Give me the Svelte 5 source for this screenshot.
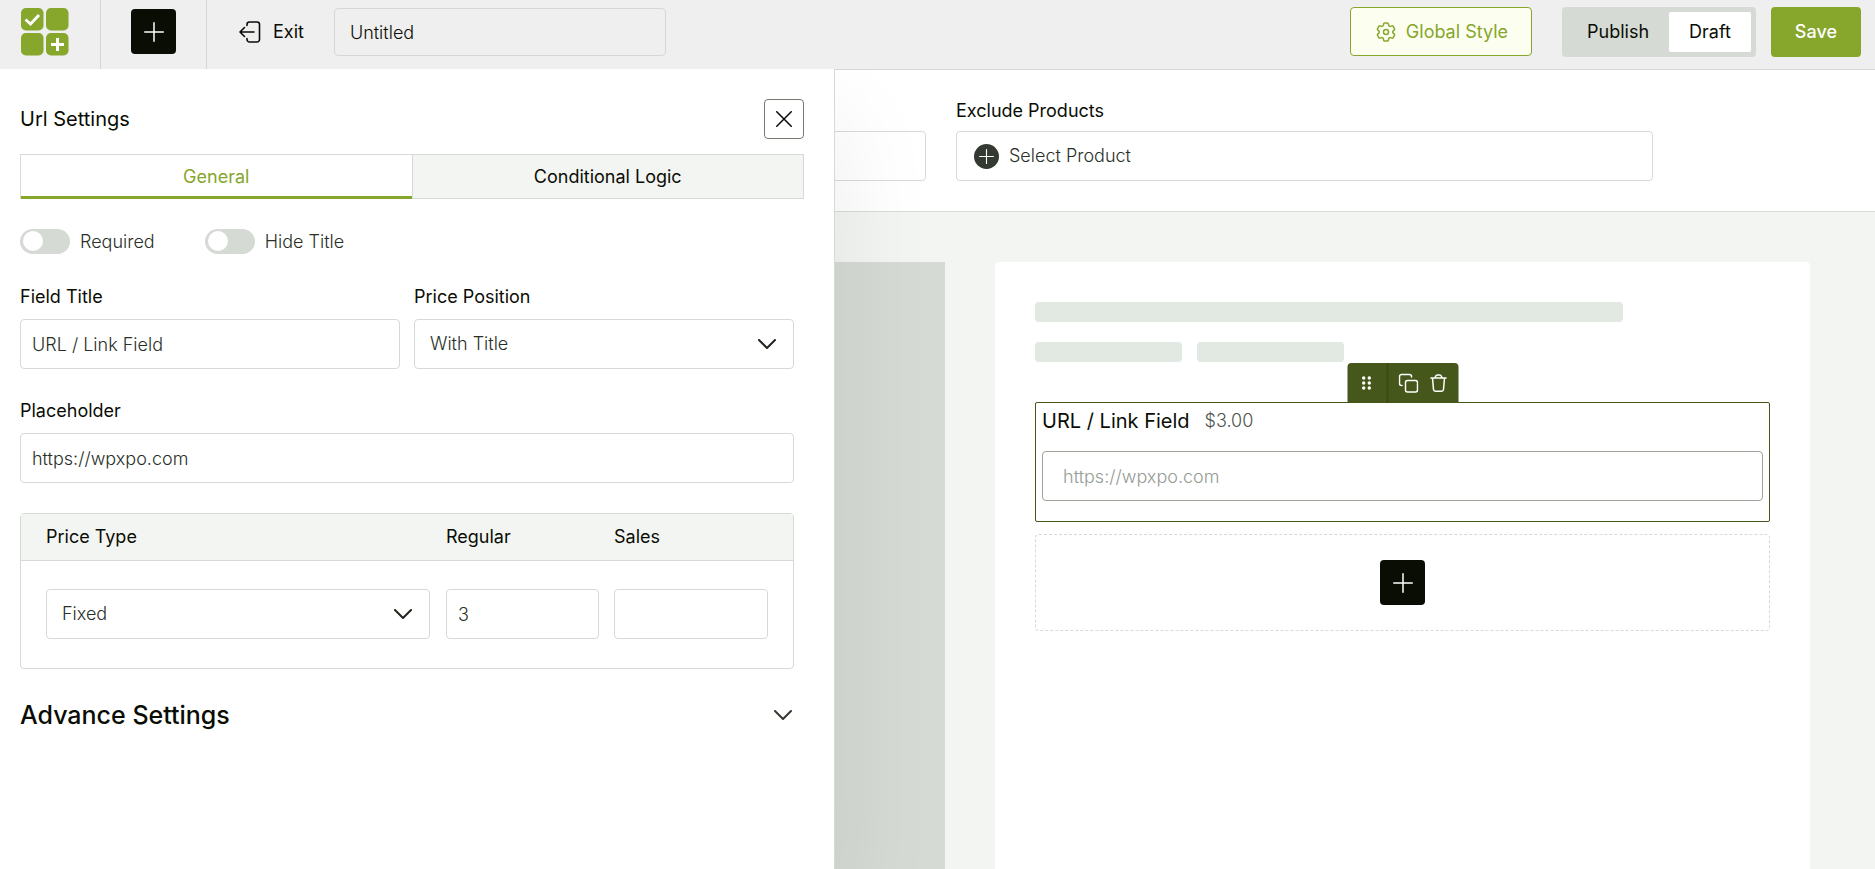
<script>
  let title = $state('Untitled');
  let status = $state('Draft');
  let tab = $state('General');
  let advanceOpen = $state(false);

  let field = $state({
    required: false,
    hideTitle: false,
    title: 'URL / Link Field',
    pricePosition: 'With Title',
    placeholder: 'https://wpxpo.com',
    priceType: 'Fixed',
    regular: '3',
    sales: '',
  });

  const tabs = ['General', 'Conditional Logic'];
  const statuses = ['Publish', 'Draft'];
  const positions = ['With Title', 'With Field'];
  const priceTypes = ['Fixed', 'Percentage', 'No Cost'];
  const dots = [3, 8, 13];

  let price = $derived('$' + Number(field.sales || field.regular || 0).toFixed(2));
</script>

{#snippet plus(size)}
  <svg viewBox="0 0 20 20" width={size} height={size} fill="none" stroke="currentColor" stroke-width="1.5" stroke-linecap="round" aria-hidden="true">
    <path d="M10 0.75v18.5M0.75 10h18.5" />
  </svg>
{/snippet}

{#snippet chevron()}
  <svg class="chevron" viewBox="0 0 18 11" width="18" height="11" fill="none" stroke="currentColor" stroke-width="2" stroke-linecap="round" stroke-linejoin="round" aria-hidden="true">
    <path d="m1 1 8 8 8-8" />
  </svg>
{/snippet}

<div class="app">
  <header class="topbar">
    <a class="logo" href="#home" aria-label="Home">
      <svg viewBox="0 0 48 48" width="48" height="48" aria-hidden="true">
        <g fill="#86a62c">
          <rect width="22.5" height="22.5" rx="5" />
          <rect x="25" width="22.5" height="22.5" rx="5" />
          <rect y="25" width="22.5" height="22.5" rx="5" />
          <rect x="25" y="25" width="22.5" height="22.5" rx="5" />
        </g>
        <path d="m4.500 11.500 5 4.500 8.500-9" fill="none" stroke="#fff" stroke-width="2.8" />
        <path d="M36.500 30v13M30 36.500h13" fill="none" stroke="#fff" stroke-width="3" />
      </svg>
    </a>
    <div class="add-wrap">
      <button type="button" class="add" aria-label="Add field">{@render plus(20)}</button>
    </div>
    <a class="exit" href="#exit">
      <svg viewBox="0 0 22 22" width="22" height="22" fill="none" stroke="currentColor" stroke-width="1.6" stroke-linecap="round" stroke-linejoin="round" aria-hidden="true">
        <path d="M8 4.500V3.500a2.500 2.500 0 0 1 2.500-2.500H18a2.500 2.500 0 0 1 2.500 2.500v15A2.500 2.500 0 0 1 18 21h-7.500A2.500 2.500 0 0 1 8 18.500v-1" />
        <path d="M15 11H1M5.500 6.500 1 11l4.500 4.500" />
      </svg>
      Exit
    </a>
    <input class="name" type="text" aria-label="Option title" bind:value={title} />
    <div class="actions">
      <button type="button" class="global">
        <svg viewBox="0 0 24 24" width="24" height="24" fill="none" stroke="currentColor" stroke-width="1.500" stroke-linejoin="round" aria-hidden="true">
          <path d="M9.594 3.940c.09-.542.56-.94 1.110-.94h2.593c.55 0 1.020.398 1.110.94l.213 1.281c.063.374.313.686.645.87.074.04.147.083.22.127.325.196.72.257 1.075.124l1.217-.456a1.125 1.125 0 0 1 1.370.49l1.296 2.247a1.125 1.125 0 0 1-.26 1.431l-1.003.827c-.293.241-.438.613-.43.992a7.723 7.723 0 0 1 0 .255c-.008.378.137.75.43.991l1.004.827c.424.35.534.955.26 1.430l-1.298 2.247a1.125 1.125 0 0 1-1.369.491l-1.217-.456c-.355-.133-.75-.072-1.076.124a6.470 6.470 0 0 1-.22.128c-.331.183-.581.495-.644.869l-.213 1.281c-.09.543-.56.94-1.110.94h-2.594c-.55 0-1.019-.398-1.110-.94l-.213-1.281c-.062-.374-.312-.686-.644-.87a6.520 6.520 0 0 1-.22-.127c-.325-.196-.72-.257-1.076-.124l-1.217.456a1.125 1.125 0 0 1-1.369-.49l-1.297-2.247a1.125 1.125 0 0 1 .26-1.431l1.004-.827c.292-.24.437-.613.43-.991a6.932 6.932 0 0 1 0-.255c.007-.38-.138-.751-.43-.992l-1.004-.827a1.125 1.125 0 0 1-.26-1.430l1.297-2.247a1.125 1.125 0 0 1 1.370-.491l1.216.456c.356.133.751.072 1.076-.124.072-.044.146-.086.22-.128.332-.183.582-.495.644-.869l.214-1.280Z" />
          <circle cx="12" cy="12" r="2.500" />
        </svg>
        Global Style
      </button>
      <div class="status" role="group" aria-label="Status">
        {#each statuses as s}
          <button type="button" class:active={status === s} aria-pressed={status === s} onclick={() => (status = s)}>{s}</button>
        {/each}
      </div>
      <button type="button" class="save">Save</button>
    </div>
  </header>

  <div class="workspace">
    <section class="products">
      <div class="product">
        <span class="label">Select Products</span>
        <button type="button" class="picker">All Products</button>
      </div>
      <div class="product">
        <span class="label">Exclude Products</span>
        <button type="button" class="picker">
          <span class="picker-icon">{@render plus(15)}</span>
          Select Product
        </button>
      </div>
    </section>

    <main class="canvas">
      <div class="gallery"></div>
      <div class="preview">
        <div class="bar long"></div>
        <div class="bars">
          <div class="bar"></div>
          <div class="bar"></div>
        </div>

        <div class="block">
          <div class="tools">
            <button type="button" class="drag" aria-label="Move">
              <svg viewBox="0 0 10 16" width="10" height="16" fill="currentColor" aria-hidden="true">
                {#each dots as y}
                  <circle cx="2.200" cy={y} r="1.700" />
                  <circle cx="7.800" cy={y} r="1.700" />
                {/each}
              </svg>
            </button>
            <button type="button" aria-label="Duplicate">
              <svg viewBox="0 0 20 20" width="20" height="20" fill="none" stroke="currentColor" stroke-width="1.500" stroke-linecap="round" stroke-linejoin="round" aria-hidden="true">
                <rect x="7" y="7.500" width="12" height="11.500" rx="2" />
                <path d="M3.500 12.500H3a2 2 0 0 1-2-2V3.500a2 2 0 0 1 2-2h8a2 2 0 0 1 2 2V4" />
              </svg>
            </button>
            <button type="button" aria-label="Delete">
              <svg viewBox="0 0 18 20" width="18" height="20" fill="none" stroke="currentColor" stroke-width="1.500" stroke-linecap="round" stroke-linejoin="round" aria-hidden="true">
                <path d="M1.500 5h15M5.500 5l.6-1.700A2 2 0 0 1 8 2h2a2 2 0 0 1 1.900 1.300L12.500 5M3 5l1 11.500A2 2 0 0 0 6 18.300h6a2 2 0 0 0 2-1.800L15 5" />
              </svg>
            </button>
          </div>
          <div class="block-head">
            <label for="preview-url">{field.title}</label>
            <span>{price}</span>
          </div>
          <input id="preview-url" type="url" placeholder={field.placeholder} />
        </div>

        <div class="dropzone">
          <button type="button" class="add" aria-label="Add field">{@render plus(20)}</button>
        </div>
      </div>
    </main>

    <aside class="panel">
      <div class="panel-head">
        <h2>Url Settings</h2>
        <button type="button" class="close" aria-label="Close">
          <svg viewBox="0 0 16 16" width="16" height="16" fill="none" stroke="currentColor" stroke-width="1.5" stroke-linecap="round" aria-hidden="true">
            <path d="m0.750 0.750 14.500 14.500M15.250 0.750 0.750 15.250" />
          </svg>
        </button>
      </div>

      <div class="tabs" role="tablist">
        {#each tabs as t}
          <button type="button" role="tab" class:active={tab === t} aria-selected={tab === t} onclick={() => (tab = t)}>{t}</button>
        {/each}
      </div>

      <div class="fields">
        <div class="toggles">
          <label><input type="checkbox" role="switch" bind:checked={field.required} />Required</label>
          <label><input type="checkbox" role="switch" bind:checked={field.hideTitle} />Hide Title</label>
        </div>

        <div class="pair">
          <div class="control">
            <label class="label" for="field-title">Field Title</label>
            <input id="field-title" type="text" bind:value={field.title} />
          </div>
          <div class="control">
            <label class="label" for="price-position">Price Position</label>
            <div class="select">
              <select id="price-position" bind:value={field.pricePosition}>
                {#each positions as p}<option>{p}</option>{/each}
              </select>
              {@render chevron()}
            </div>
          </div>
        </div>

        <div class="control">
          <label class="label" for="placeholder">Placeholder</label>
          <input id="placeholder" type="text" bind:value={field.placeholder} />
        </div>

        <table class="prices">
          <thead>
            <tr>
              <th id="price-type">Price Type</th>
              <th id="regular">Regular</th>
              <th id="sales">Sales</th>
            </tr>
          </thead>
          <tbody>
            <tr>
              <td>
                <div class="select">
                  <select aria-labelledby="price-type" bind:value={field.priceType}>
                    {#each priceTypes as p}<option>{p}</option>{/each}
                  </select>
                  {@render chevron()}
                </div>
              </td>
              <td><input type="text" aria-labelledby="regular" bind:value={field.regular} /></td>
              <td><input type="text" aria-labelledby="sales" bind:value={field.sales} /></td>
            </tr>
          </tbody>
        </table>

        <button type="button" class="advance" aria-expanded={advanceOpen} onclick={() => (advanceOpen = !advanceOpen)}>
          Advance Settings
          {@render chevron()}
        </button>
      </div>
    </aside>
  </div>
</div>

<style>
  :global(body) {
    margin: 0;
    background: #f3f5f2;
  }
  .app {
    --green: #86a62c;
    --line: #d5dad4;
    --ink: #0a0d04;
    --text: #2a3028;
    display: flex;
    flex-direction: column;
    height: 100vh;
    overflow: hidden;
    font-family: Inter, 'Liberation Sans', sans-serif;
    font-size: 18px;
    font-weight: 300;
    line-height: 24px;
    color: var(--ink);
  }
  .app *, .app *::before { box-sizing: border-box; }
  button, input, select {
    margin: 0;
    font: inherit;
    color: inherit;
  }
  button {
    display: inline-flex;
    align-items: center;
    justify-content: center;
    padding: 0;
    border: 0;
    background: none;
    cursor: pointer;
  }
  svg { flex: none; }

  /* Top bar */
  .topbar {
    display: flex;
    align-items: stretch;
    flex: none;
    height: 70px;
    padding-right: 14px;
    border-bottom: 1px solid #d6d6d6;
    background: #efefef;
    font-weight: 400;
  }
  .logo {
    padding: 8px 31px 0 21px;
    border-right: 1px solid #d6d6d6;
  }
  .add-wrap {
    padding: 9px 30px;
    border-right: 1px solid #d6d6d6;
  }
  .add {
    width: 45px;
    height: 45px;
    border-radius: 4px;
    background: var(--ink);
    color: #fff;
  }
  .exit {
    display: flex;
    align-items: center;
    gap: 12px;
    padding: 0 30px 6px 32px;
    color: inherit;
    text-decoration: none;
  }
  .name {
    align-self: flex-start;
    width: 332px;
    height: 48px;
    margin-top: 8px;
    padding: 0 15px;
    border: 1px solid #d6d6d6;
    border-radius: 4px;
    background: transparent;
    font-weight: 300;
  }
  .actions {
    display: flex;
    align-items: flex-start;
    margin-left: auto;
    padding-top: 7px;
  }
  .global {
    gap: 8px;
    height: 49px;
    margin-right: 30px;
    padding: 0 23px;
    border: 1px solid var(--green);
    border-radius: 4px;
    background: #fcfff0;
    color: var(--green);
  }
  .status {
    display: flex;
    margin-right: 15px;
    padding: 5px;
    border-radius: 4px;
    background: var(--line);
  }
  .status button {
    height: 40px;
    padding: 0 20px;
    border-radius: 2px;
  }
  .status .active { background: #fff; }
  .save {
    height: 50px;
    padding: 0 24px;
    border-radius: 4px;
    background: var(--green);
    color: #fff;
    font-weight: 500;
  }

  /* Workspace */
  .workspace {
    position: relative;
    display: flex;
    flex-direction: column;
    flex: 1;
    min-height: 0;
  }
  .label {
    display: block;
    font-weight: 400;
  }
  .products {
    display: grid;
    grid-template-columns: 1fr 1fr;
    gap: 30px;
    padding: 29px 222px 30px 229px;
    border-bottom: 1px solid var(--line);
    background: #fff;
  }
  .picker {
    justify-content: flex-start;
    gap: 10px;
    width: 100%;
    height: 50px;
    margin-top: 8px;
    padding: 0 17px;
    border: 1px solid var(--line);
    border-radius: 4px;
    color: var(--text);
  }
  .picker-icon {
    display: flex;
    align-items: center;
    justify-content: center;
    width: 25px;
    height: 25px;
    border-radius: 50%;
    background: #343a32;
    color: #fff;
  }
  .canvas {
    display: grid;
    grid-template-columns: 54fr 50fr;
    gap: 50px;
    flex: 1;
    padding: 50px 65px 0;
    background: #f3f5f2;
  }
  .gallery { background: var(--line); }
  .preview {
    padding: 40px;
    border-radius: 4px 4px 0 0;
    background: #fff;
  }
  .bars {
    display: flex;
    gap: 15px;
    margin: 20px 0 40px;
  }
  .bar {
    width: 20%;
    height: 20px;
    border-radius: 4px;
    background: #e1e9e2;
  }
  .bar.long { width: 80%; }

  .block {
    position: relative;
    height: 120px;
    padding: 6px;
    border: 1px solid #46571c;
    border-radius: 2px;
  }
  .tools {
    position: absolute;
    bottom: 100%;
    left: 50%;
    display: flex;
    height: 40px;
    padding-right: 5px;
    border-radius: 4px 4px 0 0;
    background: #46571c;
    color: #fff;
    transform: translateX(-50%);
  }
  .tools button { width: 30px; }
  .tools .drag {
    width: 41px;
    margin-right: 5px;
    border-right: 2px solid #3b4b14;
  }
  .block-head {
    display: flex;
    align-items: center;
    gap: 15px;
    margin-bottom: 18px;
  }
  .block-head label {
    font-size: 20px;
    font-weight: 400;
  }
  .block-head span { color: #4e544c; }
  .block input {
    width: 100%;
    height: 50px;
    padding: 0 20px;
    border: 1px solid #9da59b;
    border-radius: 4px;
    background: #fff;
  }
  .block input::placeholder {
    color: #969c94;
    opacity: 1;
  }
  .dropzone {
    display: flex;
    align-items: center;
    justify-content: center;
    height: 97px;
    margin-top: 12px;
    border: 1px dashed var(--line);
    border-radius: 4px;
  }

  /* Settings panel, slides over the workspace */
  .panel {
    position: absolute;
    top: -1px;
    bottom: 0;
    left: 0;
    width: 835px;
    padding: 30px 30px 0 20px;
    border-right: 1px solid var(--line);
    background: #fff;
    box-shadow: 0 50px 99px rgba(10, 13, 4, 0.08);
    clip-path: inset(0 -100px 0 0);
  }
  .panel-head {
    display: flex;
    align-items: center;
    justify-content: space-between;
  }
  h2 {
    margin: 0;
    font-size: 20px;
    font-weight: 400;
  }
  .close {
    width: 40px;
    height: 40px;
    border: 1px solid #74786f;
    border-radius: 4px;
  }
  .tabs {
    display: flex;
    height: 45px;
    margin-top: 15px;
    border: 1px solid var(--line);
  }
  .tabs button {
    flex: 1;
    background: #f3f5f2;
    font-weight: 400;
  }
  .tabs button + button { border-left: 1px solid var(--line); }
  .tabs .active {
    margin-bottom: -1px;
    background: #fff;
    box-shadow: inset 0 -3px var(--green);
    color: var(--green);
  }
  .fields { padding-right: 10px; }
  .toggles {
    display: flex;
    gap: 50px;
    margin: 30px 0 31px;
    color: var(--text);
  }
  .toggles label {
    display: flex;
    align-items: center;
    gap: 10px;
  }
  .toggles input {
    appearance: none;
    width: 50px;
    height: 25px;
    padding: 2px 3px;
    border-radius: 13px;
    background: var(--line);
  }
  .toggles input::before {
    content: '';
    display: block;
    width: 20px;
    height: 20px;
    border-radius: 50%;
    background: #fff;
  }
  .toggles input:checked { background: var(--green); }
  .toggles input:checked::before { margin-left: 24px; }
  .pair {
    display: grid;
    grid-template-columns: 1fr 1fr;
    gap: 14px;
  }
  .control {
    display: flex;
    flex-direction: column;
    gap: 10px;
    margin-bottom: 30px;
  }
  .control input, .prices input, select {
    width: 100%;
    height: 50px;
    padding: 0 11px;
    border: 1px solid var(--line);
    border-radius: 4px;
    background: #fff;
    color: var(--text);
  }
  .select {
    position: relative;
    color: #20251b;
  }
  select {
    appearance: none;
    padding: 0 15px;
  }
  .select .chevron {
    position: absolute;
    top: 20px;
    right: 18px;
    pointer-events: none;
  }
  .prices {
    width: 100%;
    table-layout: fixed;
    border: 1px solid var(--line);
    border-spacing: 0;
    border-radius: 4px;
  }
  th {
    height: 47px;
    padding: 0;
    border-bottom: 1px solid var(--line);
    background: #f3f5f2;
    font-weight: 400;
    text-align: left;
  }
  td { padding: 28px 15px 29px 0; }
  th:first-child, td:first-child { padding-left: 25px; }
  th:nth-child(2) { width: 168px; }
  th:last-child { width: 179px; }
  td:first-child { padding-right: 16px; }
  td:last-child { padding-right: 25px; }
  .advance {
    justify-content: space-between;
    width: 100%;
    margin-top: 30px;
    padding-right: 2px;
    font-size: 25px;
    font-weight: 500;
    line-height: 32px;
  }
  .advance .chevron { color: #343a32; }
</style>
